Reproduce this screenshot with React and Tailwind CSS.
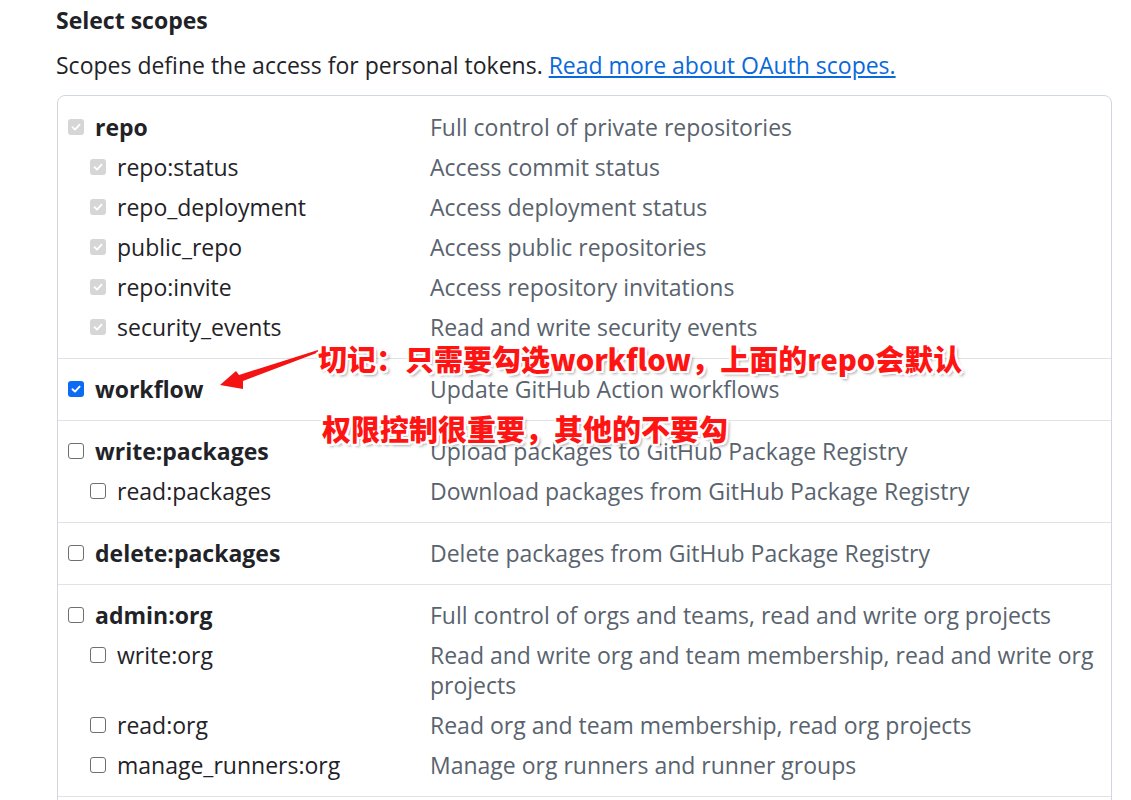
import React from "react";

const FONT = { fontFamily: "'Open Sans', 'Noto Sans CJK SC', sans-serif" };

function Box({ state }) {
  if (state === "disabled") {
    return (
      <span className="w-4 h-4 rounded-[3px] bg-[#d6d6d6] flex items-center justify-center shrink-0">
        <svg width="12" height="12" viewBox="0 0 12 12"><path d="M2.5 6.2 L5 8.6 L9.6 3.6" stroke="#fff" strokeWidth="1.8" fill="none" strokeLinecap="round" strokeLinejoin="round" /></svg>
      </span>
    );
  }
  if (state === "checked") {
    return (
      <span className="w-4 h-4 rounded-[3px] bg-[#0b6cf3] flex items-center justify-center shrink-0">
        <svg width="12" height="12" viewBox="0 0 12 12"><path d="M2.5 6.2 L5 8.6 L9.6 3.6" stroke="#fff" strokeWidth="1.9" fill="none" strokeLinecap="round" strokeLinejoin="round" /></svg>
      </span>
    );
  }
  return <span className="w-4 h-4 rounded-[3px] border border-[#6f6f6f] bg-white shrink-0" />;
}

function Row({ name, desc, child, state, bold }) {
  return (
    <div className="flex leading-[30px]">
      <div className={`w-[362px] shrink-0 flex items-center h-[30px] ${child ? "pl-[22px]" : ""}`}>
        <Box state={state} />
        <span className={`ml-[11px] text-[23px] text-[#1f2328] ${bold ? "font-bold" : ""}`}>{name}</span>
      </div>
      <div className="flex-1 text-[23px] text-[#59636e]">{desc}</div>
    </div>
  );
}

const groups = [
  [
    ["repo", "Full control of private repositories", false, "disabled"],
    ["repo:status", "Access commit status", true, "disabled"],
    ["repo_deployment", "Access deployment status", true, "disabled"],
    ["public_repo", "Access public repositories", true, "disabled"],
    ["repo:invite", "Access repository invitations", true, "disabled"],
    ["security_events", "Read and write security events", true, "disabled"],
  ],
  [["workflow", "Update GitHub Action workflows", false, "checked"]],
  [
    ["write:packages", "Upload packages to GitHub Package Registry", false, "off"],
    ["read:packages", "Download packages from GitHub Package Registry", true, "off"],
  ],
  [["delete:packages", "Delete packages from GitHub Package Registry", false, "off"]],
  [
    ["admin:org", "Full control of orgs and teams, read and write org projects", false, "off"],
    ["write:org", "Read and write org and team membership, read and write org projects", true, "off"],
    ["read:org", "Read org and team membership, read org projects", true, "off"],
    ["manage_runners:org", "Manage org runners and runner groups", true, "off"],
  ],
];

const outline =
  "[text-shadow:2px_0_0_#fff,-2px_0_0_#fff,0_2px_0_#fff,0_-2px_0_#fff,2px_2px_0_#fff,-2px_-2px_0_#fff,2px_-2px_0_#fff,-2px_2px_0_#fff,3px_3px_3px_rgba(0,0,0,0.35)]";

export default function App() {
  return (
    <div className="relative w-[1131px] h-[800px] overflow-hidden bg-white" style={FONT}>
      <div className="pl-[56px] pr-[20px]">
        <div className="text-[23px] font-bold text-[#1f2328] leading-[30px] pt-[5px]">Select scopes</div>
        <div className="text-[23px] text-[#1f2328] leading-[30px] mt-[15px]">
          Scopes define the access for personal tokens.{" "}
          <span className="text-[#0969da] underline">Read more about OAuth scopes.</span>
        </div>
        <div className="mt-[15px] ml-px w-[1055px] border border-[#d0d7de] rounded-[8px]">
          {groups.map((g, gi) => (
            <div
              key={gi}
              className={`pl-[10px] pr-[4px] flex flex-col gap-[10px] ${gi > 0 ? "border-t border-[#dfe3e8] pt-[15px] pb-[16px]" : "pt-[16px] pb-[16px]"}`}
            >
              {g.map(([n, d, c, s]) => (
                <Row key={n} name={n} desc={d} child={c} state={s} bold={!c} />
              ))}
            </div>
          ))}
          <div className="border-t border-[#dfe3e8] h-[40px]" />
        </div>
      </div>

      <svg className="absolute left-0 top-0 pointer-events-none" width="1131" height="800">
        <path
          d="M220 385 L236 371 L239 375 L318 350 L318 352.5 L243 381 L243 389 Z"
          fill="#f41212"
        />
      </svg>

      <div
        className={`absolute left-[318px] top-[340px] text-[29px] leading-[36px] font-black text-[#ff1414] whitespace-nowrap ${outline}`}
        style={{ fontFamily: "'Noto Sans CJK SC', sans-serif" }}
      >
        切记：只需要勾选workflow，上面的repo会默认
      </div>
      <div
        className={`absolute left-[322px] top-[410px] text-[29px] leading-[36px] font-black text-[#ff1414] whitespace-nowrap ${outline}`}
        style={{ fontFamily: "'Noto Sans CJK SC', sans-serif" }}
      >
        权限控制很重要，其他的不要勾
      </div>
    </div>
  );
}
